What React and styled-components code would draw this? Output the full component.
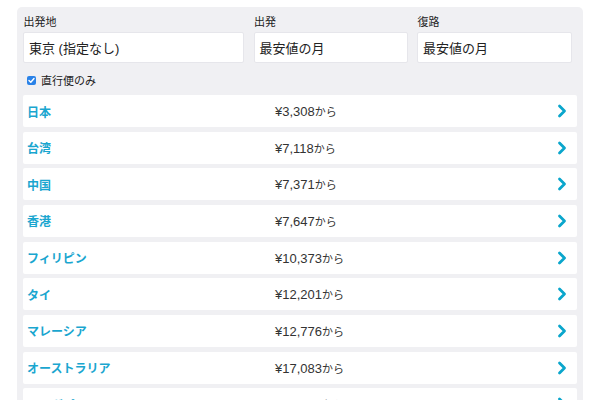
import React from "react";
import styled, { createGlobalStyle } from "styled-components";

const Global = createGlobalStyle`
  html, body { margin: 0; padding: 0; background: #fff; overflow: hidden; }
  body { font-family: "Liberation Sans", "Noto Sans CJK JP", sans-serif; color: #333; }
`;

const Page = styled.div`
  width: 600px;
  height: 400px;
  overflow: hidden;
  padding: 7px 17px 0 17px;
  box-sizing: border-box;
`;

const Panel = styled.div`
  background: #f0f0f3;
  border-radius: 5px;
  padding: 8px 6px 20px 6px;
`;

const Fields = styled.div`
  display: grid;
  grid-template-columns: 221px 154px 155px;
  column-gap: 9.5px;
`;

const Field = styled.div`
  display: flex;
  flex-direction: column;
`;

const Label = styled.label`
  font-size: 11px;
  line-height: 15px;
  margin-bottom: 2px;
  color: #222;
  padding-left: 0.5px;
`;

const Input = styled.div`
  height: 31px;
  box-sizing: border-box;
  background: #fff;
  border: 1px solid #e6e6eb;
  border-radius: 2px;
  display: flex;
  align-items: center;
  padding-left: 5px;
  font-size: 13px;
  color: #222;
`;

const CheckRow = styled.label`
  display: flex;
  align-items: center;
  gap: 5px;
  margin: 10px 0 8px;
  padding-left: 4px;
  height: 14px;
  font-size: 11px;
  color: #222;
`;

const Box = styled.span`
  width: 9px;
  height: 9px;
  border-radius: 2px;
  background: #2a82e8;
  display: inline-flex;
  align-items: center;
  justify-content: center;
`;

const List = styled.div`
  display: flex;
  flex-direction: column;
  gap: 4.67px;
`;

const Row = styled.div`
  height: 32px;
  background: #fff;
  border-radius: 2px;
  display: flex;
  align-items: center;
  padding: 0 10px 0 4px;
`;

const Name = styled.span`
  width: 248px;
  font-size: 12px;
  font-weight: bold;
  color: #1aa6cf;
`;

const Price = styled.span`
  flex: 1;
  font-size: 13px;
  color: #333;
`;

const Suffix = styled.span`
  font-size: 11px;
`;

const Chevron = () => (
  <svg width="10" height="14" viewBox="0 0 10 14">
    <path d="M2.5 2 L7.5 7 L2.5 12" fill="none" stroke="#0aa6cc" strokeWidth="2.8" strokeLinecap="round" strokeLinejoin="round" />
  </svg>
);

const rows = [
  ["日本", "¥3,308"],
  ["台湾", "¥7,118"],
  ["中国", "¥7,371"],
  ["香港", "¥7,647"],
  ["フィリピン", "¥10,373"],
  ["タイ", "¥12,201"],
  ["マレーシア", "¥12,776"],
  ["オーストラリア", "¥17,083"],
  ["シンガポール", "¥18,342"],
];

export default function App() {
  return (
    <>
      <Global />
      <Page>
        <Panel>
          <Fields>
            <Field>
              <Label>出発地</Label>
              <Input>東京 (指定なし)</Input>
            </Field>
            <Field>
              <Label>出発</Label>
              <Input>最安値の月</Input>
            </Field>
            <Field>
              <Label>復路</Label>
              <Input>最安値の月</Input>
            </Field>
          </Fields>
          <CheckRow>
            <Box>
              <svg width="7" height="7" viewBox="0 0 7 7">
                <path d="M1 3.6 L2.8 5.3 L6 1.5" fill="none" stroke="#fff" strokeWidth="1.4" strokeLinecap="round" strokeLinejoin="round" />
              </svg>
            </Box>
            直行便のみ
          </CheckRow>
          <List>
            {rows.map(([n, p]) => (
              <Row key={n}>
                <Name>{n}</Name>
                <Price>
                  {p}
                  <Suffix>から</Suffix>
                </Price>
                <Chevron />
              </Row>
            ))}
          </List>
        </Panel>
      </Page>
    </>
  );
}
